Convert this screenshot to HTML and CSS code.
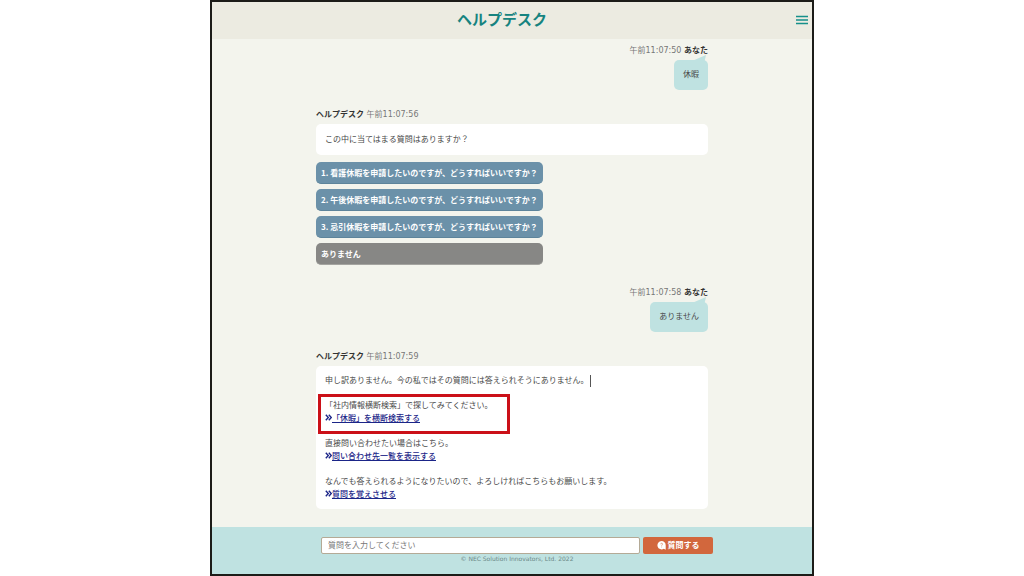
FILE: index.html
```html
<!DOCTYPE html>
<html lang="ja">
<head>
<meta charset="utf-8">
<meta name="viewport" content="width=device-width, initial-scale=1">
<title>ヘルプデスク</title>
<link rel="stylesheet" href="styles.css">
</head>
<body>
<div class="app">
  <header class="header">
    <h1 class="title">ヘルプデスク</h1>
    <button class="menu" type="button" aria-label="メニュー">
      <svg viewBox="0 0 12 10" width="12" height="10" aria-hidden="true"><path d="M0 1.5h12M0 5h12M0 8.5h12" stroke="#16908a" stroke-width="1.5"/></svg>
    </button>
  </header>
  <main class="chat">
    <section class="message mine">
      <p class="meta"><time>午前11:07:50</time> <b>あなた</b></p>
      <p class="bubble">休暇</p>
    </section>
    <section class="message">
      <p class="meta"><b>ヘルプデスク</b> <time>午前11:07:56</time></p>
      <p class="card">この中に当てはまる質問はありますか？</p>
      <div class="choices">
        <button class="choice" type="button">1. 看護休暇を申請したいのですが、どうすればいいですか？</button>
        <button class="choice" type="button">2. 午後休暇を申請したいのですが、どうすればいいですか？</button>
        <button class="choice" type="button">3. 忌引休暇を申請したいのですが、どうすればいいですか？</button>
        <button class="choice none" type="button">ありません</button>
      </div>
    </section>
    <section class="message mine">
      <p class="meta"><time>午前11:07:58</time> <b>あなた</b></p>
      <p class="bubble">ありません</p>
    </section>
    <section class="message">
      <p class="meta"><b>ヘルプデスク</b> <time>午前11:07:59</time></p>
      <div class="card answer">
        <p>申し訳ありません。今の私ではその質問には答えられそうにありません。<span class="caret"></span></p>
        <p class="marked">「社内情報横断検索」で探してみてください。<br><svg class="chevrons" viewBox="0 0 7 7" aria-hidden="true"><path d="M.8.8 3.3 3.5.8 6.2M3.8.8 6.3 3.5 3.8 6.2"/></svg><a href="#search">「休暇」を横断検索する</a></p>
        <p>直接問い合わせたい場合はこちら。<br><svg class="chevrons" viewBox="0 0 7 7" aria-hidden="true"><path d="M.8.8 3.3 3.5.8 6.2M3.8.8 6.3 3.5 3.8 6.2"/></svg><a href="#contacts">問い合わせ先一覧を表示する</a></p>
        <p>なんでも答えられるようになりたいので、よろしければこちらもお願いします。<br><svg class="chevrons" viewBox="0 0 7 7" aria-hidden="true"><path d="M.8.8 3.3 3.5.8 6.2M3.8.8 6.3 3.5 3.8 6.2"/></svg><a href="#teach">質問を覚えさせる</a></p>
      </div>
    </section>
  </main>
  <footer class="footer">
    <form class="ask">
      <input class="question" type="text" aria-label="質問" placeholder="質問を入力してください">
      <button class="send" type="button">
        <svg viewBox="0 0 9 9" width="9" height="9" aria-hidden="true"><path d="M4.5 0a4.2 4.2 0 0 1 4.2 4.2v4.5L6.8 7.8A4.2 4.2 0 1 1 4.5 0z" fill="#fff"/><path d="M3.6 3.2c0-1.3 2-1.2 2-.1 0 .7-1 .7-1 1.6M4.6 5.6v.8" fill="none" stroke="#d2673d" stroke-width=".6"/></svg>
        <span>質問する</span>
      </button>
    </form>
    <p class="copyright">© NEC Solution Innovators, Ltd. 2022</p>
  </footer>
</div>
</body>
</html>
```
FILE: styles.css
```css
*, *::before, *::after { box-sizing: border-box; }

body {
  margin: 0;
  background: #fff;
  color: #484848;
  font: 8px/12px "DejaVu Sans", "Noto Sans CJK JP", sans-serif;
}

h1, p { margin: 0; }

button, input { font: inherit; }

button { cursor: pointer; }

.app {
  display: flex;
  flex-direction: column;
  max-width: 604px;
  min-height: 100vh;
  margin: 0 auto;
  border: 2px solid #1c1c18;
  background: #f3f4ed;
}

.header {
  display: grid;
  grid-template-columns: 1fr auto;
  gap: 4px;
  align-items: center;
  height: 37px;
  padding: 0 4px 2px 0;
  background: #ecebe1;
}

.title {
  color: #16837f;
  font-size: 15px;
  line-height: 20px;
  text-align: center;
}

.menu {
  display: flex;
  padding: 0;
  border: 0;
  background: none;
}

.chat {
  display: flex;
  flex: 1;
  flex-direction: column;
  gap: 19px;
  width: 100%;
  max-width: 392px;
  margin: 0 auto;
  padding: 6px 0 18px;
}

.message {
  display: flex;
  flex-direction: column;
  align-items: flex-start;
  gap: 3px;
}

.mine { align-items: flex-end; }

.meta { color: #777; }

.meta b { color: #333; }

.bubble {
  position: relative;
  padding: 9px;
  border-radius: 5px;
  background: #bfe2e1;
}

.bubble::before {
  content: "";
  position: absolute;
  top: -5px;
  right: 2px;
  width: 14px;
  height: 6px;
  background: #bfe2e1;
  clip-path: polygon(100% 0, 90% 100%, 0 100%);
}

.card {
  width: 100%;
  padding: 9px;
  border-radius: 5px;
  background: #fff;
  line-height: 13px;
}

.choices {
  display: grid;
  gap: 5px;
  margin: 4px 0 3px;
}

.choice {
  min-height: 22px;
  padding: 0 5px;
  border: 0;
  border-bottom: 1px solid #5d849b;
  border-radius: 5px;
  background: #6b91a9;
  color: #fff;
  font-family: "Noto Sans CJK JP", sans-serif;
  font-weight: bold;
  text-align: left;
}

.none {
  border-color: #a4a4a0;
  background: #878785;
}

.answer {
  display: grid;
  gap: 12px;
  padding: 8px 9px;
}

.marked { position: relative; }

/* Red frame drawn over the card around the search hint. */
.marked::after {
  content: "";
  position: absolute;
  inset: -5px auto -9px -7px;
  width: 192px;
  border: 3px solid #cb1018;
  pointer-events: none;
}

.caret {
  display: inline-block;
  width: 1px;
  height: 12px;
  margin-left: 1px;
  background: #555;
  vertical-align: middle;
}

.chevrons {
  width: 7px;
  height: 7px;
  fill: none;
  stroke: #1b2588;
  stroke-width: 1.4;
}

.answer a {
  color: #1b2588;
  font-weight: 500;
}

.footer {
  padding: 10px 15px 10px 25px;
  background: #bfe2e1;
}

.ask {
  display: flex;
  gap: 3px;
  max-width: 392px;
  margin: 0 auto;
}

.question {
  flex: 1;
  min-width: 0;
  height: 17px;
  padding: 0 6px;
  border: 1px solid #b4aa96;
  border-radius: 2px;
  background: #fff;
}

.question::placeholder { color: #777; }

.send {
  display: flex;
  align-items: center;
  justify-content: center;
  gap: 2px;
  width: 70px;
  padding: 0;
  border: 0;
  border-radius: 2px;
  background: #d2673d;
  color: #fff;
  font-weight: bold;
}

.copyright {
  color: #6c8988;
  font-size: 6px;
  line-height: 10px;
  text-align: center;
}
```
